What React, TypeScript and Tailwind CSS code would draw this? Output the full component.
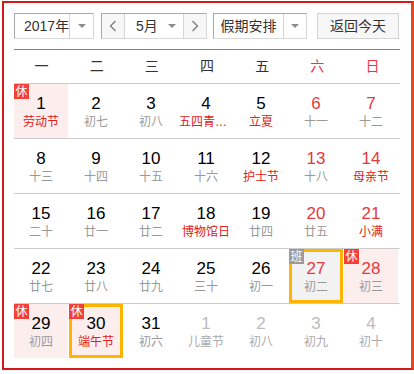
import React from 'react'

interface Day {
  n: number
  sub: string
  fest?: boolean
  weekend?: boolean
  other?: boolean
  badge?: '休' | '班'
  rest?: boolean
  work?: boolean
  mark?: boolean
}

const weeks: Day[][] = [
  [
    { n: 1, sub: '劳动节', fest: true, badge: '休', rest: true },
    { n: 2, sub: '初七' },
    { n: 3, sub: '初八' },
    { n: 4, sub: '五四青年节', fest: true },
    { n: 5, sub: '立夏', fest: true },
    { n: 6, sub: '十一', weekend: true },
    { n: 7, sub: '十二', weekend: true },
  ],
  [
    { n: 8, sub: '十三' },
    { n: 9, sub: '十四' },
    { n: 10, sub: '十五' },
    { n: 11, sub: '十六' },
    { n: 12, sub: '护士节', fest: true },
    { n: 13, sub: '十八', weekend: true },
    { n: 14, sub: '母亲节', fest: true, weekend: true },
  ],
  [
    { n: 15, sub: '二十' },
    { n: 16, sub: '廿一' },
    { n: 17, sub: '廿二' },
    { n: 18, sub: '博物馆日', fest: true },
    { n: 19, sub: '廿四' },
    { n: 20, sub: '廿五', weekend: true },
    { n: 21, sub: '小满', fest: true, weekend: true },
  ],
  [
    { n: 22, sub: '廿七' },
    { n: 23, sub: '廿八' },
    { n: 24, sub: '廿九' },
    { n: 25, sub: '三十' },
    { n: 26, sub: '初一' },
    { n: 27, sub: '初二', weekend: true, badge: '班', work: true, mark: true },
    { n: 28, sub: '初三', weekend: true, badge: '休', rest: true },
  ],
  [
    { n: 29, sub: '初四', badge: '休', rest: true },
    { n: 30, sub: '端午节', fest: true, badge: '休', rest: true, mark: true },
    { n: 31, sub: '初六' },
    { n: 1, sub: '儿童节', other: true },
    { n: 2, sub: '初八', other: true },
    { n: 3, sub: '初九', other: true },
    { n: 4, sub: '初十', other: true },
  ],
]

const heads = ['一', '二', '三', '四', '五', '六', '日']

const Caret = () => (
  <span className="h-0 w-0 border-l-[4px] border-r-[4px] border-t-[4px] border-l-transparent border-r-transparent border-t-[#8c8c8c]" />
)

const Chevron = ({ dir }: { dir: 'l' | 'r' }) => (
  <svg width="8" height="12" viewBox="0 0 8 12" fill="none">
    <path
      d={dir === 'l' ? 'M6.5 1 L1.5 6 L6.5 11' : 'M1.5 1 L6.5 6 L1.5 11'}
      stroke="#777"
      strokeWidth="1.2"
    />
  </svg>
)

const DayCell = ({ d }: { d: Day }) => {
  let bg = ''
  if (d.rest) bg = 'bg-[#fdeeee]'
  if (d.work) bg = 'bg-[#f2f2f2]'
  const numColor = d.other
    ? 'text-[#bbbbbb]'
    : d.weekend
      ? 'text-[#e4393c]'
      : 'text-black'
  const subColor = d.other
    ? 'text-[#aaaaaa]'
    : d.fest
      ? 'text-[#e02020]'
      : 'text-[#999999]'
  return (
    <div className="w-[55px] pr-[1px]">
      <div
        className={`relative flex h-[54px] w-[54px] flex-col items-center pt-[10px] ${bg} ${
          d.mark ? 'shadow-[inset_0_0_0_3px_#ffb400]' : ''
        }`}
      >
        {d.badge && (
          <span
            className={`absolute left-0 top-0 flex h-[15px] w-[15px] items-center justify-center text-[12px] leading-none text-white ${
              d.badge === '休' ? 'bg-[#f3413a]' : 'bg-[#9a9a9a]'
            }`}
          >
            {d.badge}
          </span>
        )}
        <span className={`text-[17px] leading-[20px] ${numColor}`}>{d.n}</span>
        <span
          className={`w-[54px] truncate text-center text-[12px] leading-[16px] ${subColor}`}
        >
          {d.sub}
        </span>
      </div>
    </div>
  )
}

export default function App() {
  return (
    <div
      className="min-h-screen bg-white pl-[2px] pt-[1px]"
      style={{ fontFamily: '"Liberation Sans", "Noto Sans CJK SC", sans-serif' }}
    >
      <div className="w-[412px] border-2 border-[#d3191b] border-r-[3px] border-r-[#e9451f] pb-[10px] pl-[10px] pr-[11px] pt-[10px]">
        {/* toolbar */}
        <div className="flex h-[26px] items-stretch whitespace-nowrap text-[14px] text-[#333]">
          <div className="flex w-[80px] border border-[#a8a8a8] border-b-[#d8d8d8] border-r-[#d8d8d8] bg-white">
            <div className="flex flex-1 items-center pl-[9px]">2017年</div>
            <div className="flex w-[24px] items-center justify-center border-l border-[#d5d5d5]">
              <Caret />
            </div>
          </div>
          <div className="ml-[7px] flex w-[106px] border border-[#a8a8a8] border-b-[#d8d8d8] border-r-[#d8d8d8]">
            <div className="flex w-[22px] items-center justify-center bg-[#f7f7f7]">
              <Chevron dir="l" />
            </div>
            <div className="flex w-[60px] items-center justify-between border-l border-r border-[#d5d5d5] bg-white pl-[11px] pr-[7px]">
              <span>5月</span>
              <Caret />
            </div>
            <div className="flex flex-1 items-center justify-center bg-[#f7f7f7]">
              <Chevron dir="r" />
            </div>
          </div>
          <div className="ml-[6px] flex w-[94px] border border-[#a8a8a8] border-b-[#d8d8d8] border-r-[#d8d8d8] bg-white">
            <div className="flex flex-1 items-center justify-center">假期安排</div>
            <div className="flex w-[23px] items-center justify-center border-l border-[#d5d5d5]">
              <Caret />
            </div>
          </div>
          <button className="ml-[10px] flex w-[82px] items-center justify-center border border-[#d3d3d3] bg-[#f7f7f7] text-[14px] text-[#333]">
            返回今天
          </button>
        </div>

        {/* week header */}
        <div className="mt-[10px] grid h-[34px] grid-cols-7 border-t border-[#e25a55] text-[14px]">
          {heads.map((h, i) => (
            <div
              key={h}
              className={`flex items-center justify-center ${
                i >= 5 ? 'text-[#e4393c]' : 'text-[#333]'
              }`}
            >
              {h}
            </div>
          ))}
        </div>

        {/* days */}
        {weeks.map((w, wi) => (
          <div key={wi} className="flex border-t border-[#cccccc]">
            {w.map((d, di) => (
              <DayCell key={di} d={d} />
            ))}
          </div>
        ))}
      </div>
    </div>
  )
}
